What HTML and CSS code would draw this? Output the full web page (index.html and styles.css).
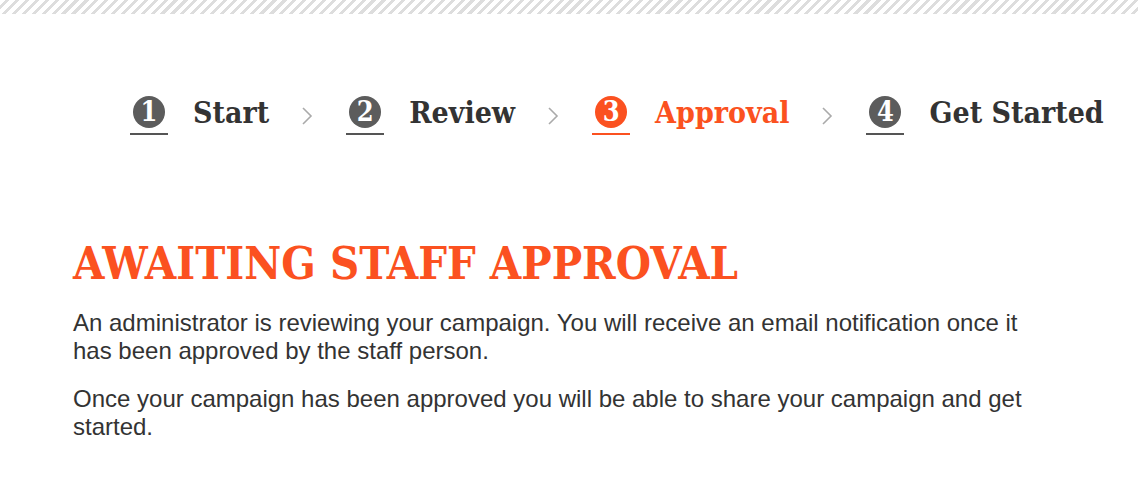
FILE: index.html
```html
<!DOCTYPE html>
<html lang="en">
<head>
    <meta charset="UTF-8">
    <title>Awaiting Staff Approval</title>
    <link rel="stylesheet" href="styles.css">
</head>
<body>
    <div class="stripes"></div>

    <!-- Adımlar -->
    <nav class="steps">
        <div class="step">
            <span class="badge"><span class="num">1</span></span>
            <span class="label">Start</span>
        </div>
        <svg class="sep" width="12" height="18" viewBox="0 0 12 18"><path d="M2 1 L10 9 L2 17" fill="none" stroke="#aaa" stroke-width="1.6"/></svg>
        <div class="step">
            <span class="badge"><span class="num">2</span></span>
            <span class="label">Review</span>
        </div>
        <svg class="sep" width="12" height="18" viewBox="0 0 12 18"><path d="M2 1 L10 9 L2 17" fill="none" stroke="#aaa" stroke-width="1.6"/></svg>
        <div class="step active">
            <span class="badge"><span class="num">3</span></span>
            <span class="label">Approval</span>
        </div>
        <svg class="sep" width="12" height="18" viewBox="0 0 12 18"><path d="M2 1 L10 9 L2 17" fill="none" stroke="#aaa" stroke-width="1.6"/></svg>
        <div class="step">
            <span class="badge"><span class="num">4</span></span>
            <span class="label">Get Started</span>
        </div>
    </nav>

    <div class="content">
        <h1>AWAITING STAFF APPROVAL</h1>
        <p>An administrator is reviewing your campaign. You will receive an email notification once it has been approved by the staff person.</p>
        <p>Once your campaign has been approved you will be able to share your campaign and get started.</p>
    </div>
</body>
</html>
```

FILE: styles.css
```css
body {
    margin: 0;
    background-color: white;
    color: #333;
    font-family: "Liberation Sans", Arial, sans-serif;
}
.stripes {
    height: 14px;
    background: repeating-linear-gradient(135deg, #fff 0, #fff 4px, #ddd 4px, #ddd 7px);
}
.steps {
    display: flex;
    align-items: center;
    padding: 81px 0 0 130px;
}
.step {
    display: flex;
    align-items: center;
}
.badge {
    width: 38px;
    height: 38px;
    display: flex;
    justify-content: center;
    border-bottom: 2px solid #555;
    box-sizing: border-box;
}
.num {
    width: 32px;
    height: 32px;
    margin-top: -1px;
    border-radius: 50%;
    background-color: #5c5c5c;
    color: white;
    font-family: "DejaVu Serif Condensed", "DejaVu Serif", serif;
    font-weight: bold;
    font-size: 27px;
    line-height: 32px;
    text-align: center;
}
.label {
    margin-left: 25px;
    padding-bottom: 7px;
    font-family: "DejaVu Serif Condensed", "DejaVu Serif", serif;
    font-weight: bold;
    font-size: 30px;
    color: #333;
}
.step.active .badge {
    border-bottom-color: #fb5120;
}
.step.active .num {
    background-color: #fb5120;
}
.step.active .label {
    color: #fb5120;
}
.sep {
    margin: 0 33px 0 32px;
}
.content {
    padding: 102px 100px 0 73px;
}
h1 {
    margin: 0 0 20px;
    font-family: "DejaVu Serif Condensed", "DejaVu Serif", serif;
    font-weight: bold;
    font-size: 45px;
    line-height: 50px;
    color: #fb5120;
}
p {
    margin: 0 0 20px;
    font-size: 24px;
    line-height: 28px;
}
```
